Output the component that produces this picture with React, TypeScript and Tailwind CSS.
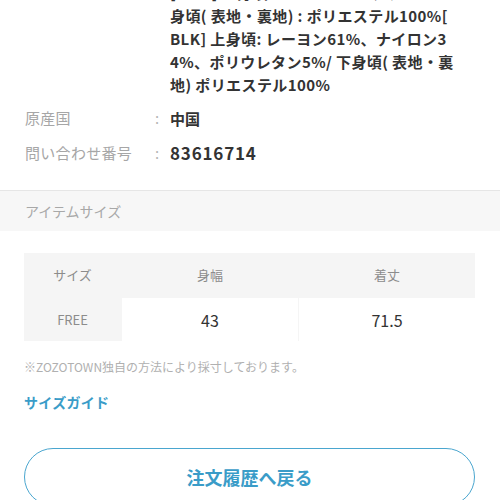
const font = { fontFamily: '"Noto Sans CJK JP", "Noto Sans", "Liberation Sans", sans-serif' };

const materialLines = [
  '[WHT] 上身頃: レーヨン61%、ナイロン3',
  '身頃( 表地・裏地) : ポリエステル100%[',
  'BLK] 上身頃: レーヨン61%、ナイロン3',
  '4%、ポリウレタン5%/ 下身頃( 表地・裏',
  '地) ポリエステル100%',
];

const InfoRow = ({ label, children }: { label: string; children: React.ReactNode }) => (
  <div className="flex items-center h-[22px]">
    <div className="w-[130px] shrink-0 text-[15px] tracking-[0.3px] text-[#a6a6a6]">{label}</div>
    <div className="w-[15px] shrink-0 text-[15px] text-[#b5b5b5]">:</div>
    <div className="flex-1 font-semibold text-[#333]">{children}</div>
  </div>
);

export default function App() {
  return (
    <div className="w-[500px] h-[500px] overflow-hidden bg-white" style={font}>
      {/* product details */}
      <div className="px-[25px] pb-[26px]">
        <div className="-mt-[19px] flex">
          <div className="w-[145px] shrink-0" />
          <div className="flex-1 text-[15px] leading-[23px] font-semibold tracking-[0.4px] text-[#333]">
            {materialLines.map((l, i) => (
              <div key={i} className="whitespace-nowrap">{l}</div>
            ))}
          </div>
        </div>
        <div className="mt-[11px] flex flex-col gap-[13px]">
          <InfoRow label="原産国">
            <span className="text-[15px]">中国</span>
          </InfoRow>
          <InfoRow label="問い合わせ番号">
            <span className="text-[17px] tracking-[0.8px]">83616714</span>
          </InfoRow>
        </div>
      </div>

      {/* section header */}
      <div className="border-t border-[#e6e6e6] bg-[#f7f7f7] h-[41px] flex items-center px-[25px]">
        <span className="text-[14px] text-[#a8a8a8]">アイテムサイズ</span>
      </div>

      <div className="px-[24px] pt-[22px]">
        {/* size table */}
        <div className="w-[451px] bg-[#f5f5f5] grid grid-cols-[97px_176px_1fr] grid-rows-[44px_43px] gap-px">
          <div className="flex items-center justify-center text-[13px] text-[#8c8c8c]">サイズ</div>
          <div className="flex items-center justify-center text-[13px] text-[#8c8c8c]">身幅</div>
          <div className="flex items-center justify-center text-[13px] text-[#8c8c8c]">着丈</div>
          <div className="flex items-center justify-center text-[13px] text-[#8c8c8c]">FREE</div>
          <div className="bg-white flex items-center justify-center text-[16px] text-[#333]">43</div>
          <div className="bg-white flex items-center justify-center text-[16px] text-[#333]">71.5</div>
        </div>

        <p className="mt-[18px] text-[12px] text-[#b0b0b0] leading-[16px]">
          ※ZOZOTOWN独自の方法により採寸しております。
        </p>

        <div className="mt-[17px] text-[14px] font-bold tracking-[0.3px] text-[#3a9cc8] leading-[20px]">サイズガイド</div>

        <button className="mt-[36px] w-[451px] h-[58px] rounded-full border-[1.5px] border-[#4aa6cf] flex items-center justify-center">
          <span className="text-[18px] font-bold text-[#3a9cc8]">注文履歴へ戻る</span>
        </button>
      </div>
    </div>
  );
}
